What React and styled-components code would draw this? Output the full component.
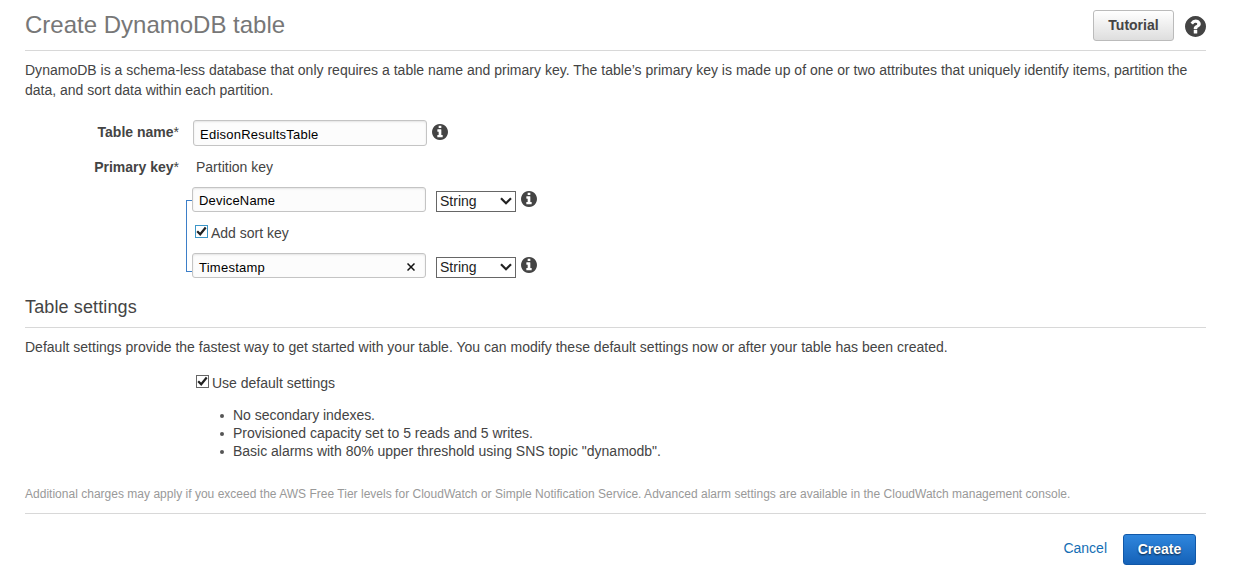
import React from 'react';
import styled, { createGlobalStyle } from 'styled-components';

const GlobalStyle = createGlobalStyle`
  * { box-sizing: border-box; }
  body {
    margin: 0;
    background: #fff;
    color: #444;
    font: 14px/20px "Liberation Sans", Arial, sans-serif;
  }
`;

const Page = styled.main`
  width: 1249px;
  height: 579px;
  padding: 0 43px 0 25px;
  overflow: hidden;
`;

const Header = styled.header`
  display: flex;
  align-items: center;
  height: 51px;
  border-bottom: 1px solid #d8d8d8;
`;

const Title = styled.h1`
  flex: 1;
  margin: 0;
  font-size: 24px;
  line-height: 30px;
  font-weight: 400;
  color: #777;
`;

const Button = styled.button`
  height: 31px;
  width: ${(p) => (p.$primary ? 73 : 81)}px;
  padding: 0 0 ${(p) => (p.$primary ? 2 : 0)}px;
  border: 1px solid ${(p) => (p.$primary ? '#1158a8' : '#bbb')};
  border-radius: 3px;
  background: ${(p) => (p.$primary ? 'linear-gradient(#2f86dd, #1562b8)' : 'linear-gradient(#fff, #dedede)')};
  color: ${(p) => (p.$primary ? '#fff' : '#444')};
  text-shadow: ${(p) => (p.$primary ? '0 1px 2px rgba(0,0,0,.7)' : 'none')};
  font: bold 14px/28px "Liberation Sans", Arial, sans-serif;
`;

const Icon = styled.svg`
  display: block;
  flex: none;
  width: ${(p) => p.$size}px;
  height: ${(p) => p.$size}px;
  margin: ${(p) => p.$margin || 0};
  fill: #444;
`;

const Text = styled.span`
  display: block;
  white-space: nowrap;
  letter-spacing: ${(p) => p.$track || 0}px;
`;

const Intro = styled.div`
  padding-top: 9px;
`;

const Form = styled.section`
  padding-top: 20px;
`;

const Row = styled.div`
  display: flex;
  align-items: flex-start;
  height: ${(p) => p.$height}px;
`;

const Label = styled.label`
  width: 154px;
  padding-top: ${(p) => p.$top || 0}px;
  text-align: right;
  font-weight: 700;
  white-space: nowrap;

  sup {
    font-weight: 400;
    font-size: 14px;
    line-height: 0;
    vertical-align: baseline;
  }
`;

const Field = styled.div`
  display: flex;
  flex: none;
  align-items: center;
  justify-content: space-between;
  width: 234px;
  height: ${(p) => p.$height || 25}px;
  margin-left: ${(p) => p.$left || 0}px;
  padding: ${(p) => p.$top || 3}px 10px 0 6px;
  border: 1px solid #c4c4c4;
  border-radius: 3px;
  background: #fcfcfc;
  box-shadow: inset 0 1px 2px #e4e4e4;
  color: #000;

  svg { margin-bottom: 2px; }
`;

const FieldText = styled(Text)`
  font-size: 13px;
`;

const KeyGroup = styled.div`
  display: flex;
  margin-left: 161px;
  height: 93px;
`;

const Bracket = styled.div`
  width: 6px;
  height: 72px;
  margin-top: 13px;
  border: 1px solid #3d7fc8;
  border-right: 0;
`;

const Keys = styled.div`
  flex: 1;
`;

const Select = styled.div`
  display: flex;
  flex: none;
  align-items: center;
  justify-content: space-between;
  width: 80px;
  height: 21px;
  margin: 4px 0 0 10px;
  padding: 0 3px 2px;
  border: 1px solid #666;
  color: #222;
`;

const CheckRow = styled.div`
  display: flex;
  align-items: flex-start;
  margin-left: ${(p) => p.$left}px;
  height: ${(p) => p.$height}px;
`;

const CheckBox = styled.span`
  width: 13px;
  height: 13px;
  margin: 2px 3px 0 0;
  border: 1px solid ${(p) => (p.$active ? '#3c96c8' : '#666')};

  svg { display: block; }
`;

const SectionTitle = styled.h2`
  height: 32px;
  margin: 16px 0 9px;
  border-bottom: 1px solid #d8d8d8;
  font-size: 18px;
  line-height: 22px;
  font-weight: 400;
  letter-spacing: 0.13px;
`;

const List = styled.ul`
  margin: 13px 0 0 194px;
  padding: 0;
  list-style: none;
  line-height: 18px;
`;

const Item = styled.li`
  display: flex;
  align-items: center;

  &::before {
    content: '';
    width: 4px;
    height: 4px;
    margin: 2px 9px 0 1px;
    border-radius: 50%;
    background: #555;
  }
`;

const Note = styled.div`
  height: 30px;
  margin-top: 24px;
  border-bottom: 1px solid #d8d8d8;
  color: #999;
  font-size: 12px;
  line-height: 20px;
`;

const Footer = styled.footer`
  display: flex;
  justify-content: flex-end;
  align-items: center;
  gap: 16px;
  padding: 20px 10px 0 0;
`;

const Cancel = styled.a`
  margin-top: -4px;
  color: #146eb4;
`;

const Defaults = styled(CheckRow)`
  margin-top: 16px;
`;

const DISC =
  'M1536 768q0 209-103 385.5t-279.500 279.500-385.500 103-385.500-103-279.500-279.500-103-385.500 103-385.500 279.500-279.500 385.500-103 385.500 103 279.500 279.500 103 385.500z';

const Help = () => (
  <Icon $size={21} $margin="2px 0 0 11px" viewBox="0 0 1536 1536">
    <path d={'M896 1248v-192q0-14-9-23t-23-9h-192q-14 0-23 9t-9 23v192q0 14 9 23t23 9h192q14 0 23-9t9-23zM1152 576q0-88-55.500-163t-138.500-116-170.500-41q-243 0-371 213-15 24 8 42l132 100q7 6 19 6 16 0 25-12 53-68 86-92 34-24 86-24 48 0 85.500 26t37.500 59q0 38-20 61t-68 45q-63 28-115.500 86.500t-52.500 125.500v36q0 14 9 23t23 9h192q14 0 23-9t9-23q0-19 21.500-49.500t54.500-49.500q32-18 49-28.500t46-35 44.500-48 28-60.500 12.500-81z' + DISC} />
  </Icon>
);

const Info = () => (
  <Icon $size={16} $margin="4px 0 0 5px" viewBox="0 0 1536 1536">
    <path d={'M1024 1248v-160q0-14-9-23t-23-9h-96v-512q0-14-9-23t-23-9h-320q-14 0-23 9t-9 23v160q0 14 9 23t23 9h96v320h-96q-14 0-23 9t-9 23v160q0 14 9 23t23 9h448q14 0 23-9t9-23zM896 352v-160q0-14-9-23t-23-9h-192q-14 0-23 9t-9 23v160q0 14 9 23t23 9h192q14 0 23-9t9-23z' + DISC} />
  </Icon>
);

const Check = ({ active }) => (
  <CheckBox $active={active}>
    <svg width="11" height="11" viewBox="0 0 11 11" fill="none" stroke="#222" strokeWidth="2.200">
      <path d="M1.200 5.200L4.200 8.300L9.700 1.500" />
    </svg>
  </CheckBox>
);

const TypeSelect = () => (
  <Select>
    <Text>String</Text>
    <svg width="12" height="8" viewBox="0 0 12 8" fill="none" stroke="#222" strokeWidth="2.200">
      <path d="M1 1.200L6 6.200L11 1.200" />
    </svg>
  </Select>
);

export default function App() {
  return (
    <>
      <GlobalStyle />
      <Page>
        <Header>
          <Title>Create DynamoDB table</Title>
          <Button>Tutorial</Button>
          <Help />
        </Header>
        <Intro>
          <Text $track={0.011}>DynamoDB is a schema-less database that only requires a table name and primary key. The table’s primary key is made up of one or two attributes that uniquely identify items, partition the</Text>
          <Text>data, and sort data within each partition.</Text>
        </Intro>
        <Form>
          <Row $height={37}>
            <Label $top={2}>Table name<sup>*</sup></Label>
            <Field $left={14} $height={26} $top={4}><FieldText $track={0.24}>EdisonResultsTable</FieldText></Field>
            <Info />
          </Row>
          <Row $height={30}>
            <Label>Primary key<sup>*</sup></Label>
            <CheckRow $left={17} $height={20}><Text>Partition key</Text></CheckRow>
          </Row>
          <KeyGroup>
            <Bracket />
            <Keys>
              <Row $height={36}>
                <Field><FieldText $track={0.18}>DeviceName</FieldText></Field>
                <TypeSelect />
                <Info />
              </Row>
              <CheckRow $left={3} $height={30}>
                <Check active />
                <Text>Add sort key</Text>
              </CheckRow>
              <Row $height={27}>
                <Field $top={4}>
                  <FieldText $track={0.25}>Timestamp</FieldText>
                  <svg width="8" height="8" viewBox="0 0 8 8" stroke="#111" strokeWidth="1.500">
                    <path d="M0.500 0.500L7.500 7.500M7.500 0.500L0.500 7.500" />
                  </svg>
                </Field>
                <TypeSelect />
                <Info />
              </Row>
            </Keys>
          </KeyGroup>
        </Form>
        <SectionTitle>Table settings</SectionTitle>
        <Text $track={0.008}>Default settings provide the fastest way to get started with your table. You can modify these default settings now or after your table has been created.</Text>
        <Defaults $left={171} $height={20}>
          <Check />
          <Text>Use default settings</Text>
        </Defaults>
        <List>
          <Item><Text $track={-0.02}>No secondary indexes.</Text></Item>
          <Item><Text $track={-0.01}>Provisioned capacity set to 5 reads and 5 writes.</Text></Item>
          <Item><Text $track={-0.01}>Basic alarms with 80% upper threshold using SNS topic "dynamodb".</Text></Item>
        </List>
        <Note>
          <Text $track={0.015}>Additional charges may apply if you exceed the AWS Free Tier levels for CloudWatch or Simple Notification Service. Advanced alarm settings are available in the CloudWatch management console.</Text>
        </Note>
        <Footer>
          <Cancel>Cancel</Cancel>
          <Button $primary>Create</Button>
        </Footer>
      </Page>
    </>
  );
}
